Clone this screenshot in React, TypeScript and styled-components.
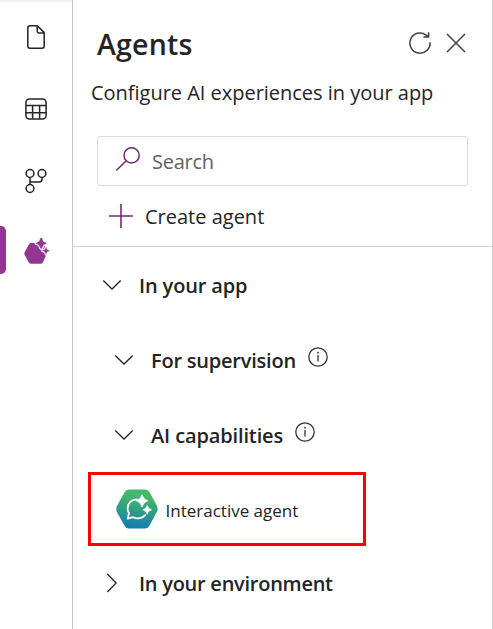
import React from "react";
import styled, { createGlobalStyle } from "styled-components";

const GlobalStyle = createGlobalStyle`
  *, *::before, *::after { box-sizing: border-box; }
  body { margin: 0; background: #fff; color: #242424; overflow: hidden;
    font-family: "Open Sans", "Segoe UI", "Noto Sans", sans-serif; }
  svg { display: block; flex: none; overflow: visible; }
`;

const Shell = styled.div`
  display: flex;
  width: 493px;
  height: 629px;
`;

const Rail = styled.nav`
  width: 73px;
  padding-top: 1px;
  display: flex;
  flex-direction: column;
  border-right: 1px solid #c6c6c6;
  background: linear-gradient(#f0f0f0, #fff 4px);
`;

const RailItem = styled.button<{ $active?: boolean }>`
  position: relative;
  height: ${(p) => (p.$active ? 66 : 72)}px;
  padding: ${(p) => (p.$active ? "2px 0 0 2px" : "0")};
  border: 0;
  background: none;
  display: flex;
  align-items: center;
  justify-content: center;

  &::before {
    content: "";
    display: ${(p) => (p.$active ? "block" : "none")};
    position: absolute;
    left: 0;
    top: 9px;
    width: 6px;
    height: 48px;
    border-radius: 0 5px 5px 0;
    background: #933692;
  }
`;

const Panel = styled.main`
  width: 420px;
  border-right: 1px solid #cfcfcf;
`;

const Header = styled.header`
  height: 78px;
  padding: 10px 26px 0 24px;
  display: flex;
  align-items: center;
  justify-content: space-between;
`;

const Title = styled.h1`
  margin: 0;
  font-size: 28.5px;
  line-height: 36px;
  font-weight: 600;
  letter-spacing: 0.2px;
  white-space: nowrap;
`;

const Actions = styled.div`
  display: flex;
  gap: 14px;
  padding-bottom: 2px;
`;

const Description = styled.p`
  margin: 0;
  padding-left: 18px;
  font-size: 20px;
  line-height: 29px;
  letter-spacing: -0.02px;
  white-space: nowrap;
`;

const SearchBox = styled.label`
  margin: 29px 24px 0;
  height: 50px;
  border: 1px solid #d9d9d9;
  border-radius: 3px;
  display: flex;
  align-items: center;
  gap: 11px;
  padding-left: 18px;
  font-size: 20px;
  letter-spacing: -0.25px;
  color: #616161;
`;

const CreateRow = styled.div`
  height: 61px;
  padding-left: 36px;
  border-bottom: 1px solid #cfcfcf;
  display: flex;
  align-items: center;
  gap: 12px;
  font-size: 20px;
`;

const Section = styled.div<{ $nested?: boolean; $height?: number }>`
  height: ${(p) => p.$height ?? 75}px;
  padding-left: ${(p) => (p.$nested ? 42 : 30)}px;
  display: flex;
  align-items: center;
`;

const SectionTitle = styled.h2<{ $spacing: number }>`
  margin: 0 12px 0 18px;
  font-size: 20px;
  line-height: 28px;
  font-weight: 600;
  letter-spacing: ${(p) => p.$spacing}px;
  white-space: nowrap;
`;

const InfoSlot = styled.span`
  padding-bottom: 8px;
`;

const AgentCard = styled.div`
  width: 278px;
  height: 74px;
  margin: -1px 0 0 15px;
  padding-left: 25px;
  border: 3px solid #fe0000;
  display: flex;
  align-items: center;
  gap: 7.5px;
  font-size: 17px;
`;

const AgentName = styled.span`
  line-height: 24px;
  padding-top: 4px;
`;

const Chevron = ({ right }: { right?: boolean }) => (
  <svg width="18" height="18" viewBox="0 0 18 18" fill="none" stroke="#242424" strokeWidth="1.3">
    <path d={right ? "M4.3 -1 13.1 8 4.3 17" : "M.3 3.5 9 12 17.7 3.5"} />
  </svg>
);

const Info = () => (
  <svg width="20" height="20" viewBox="0 0 20 20" fill="none" stroke="#333" strokeWidth="1.3">
    <circle cx="10" cy="10" r="9.2" />
    <path d="M10 8v6.5" />
    <circle cx="10" cy="5.7" r=".9" fill="#333" stroke="none" />
  </svg>
);

const DocumentIcon = () => (
  <svg width="18" height="24" viewBox="0 0 18 24" fill="none" stroke="#242424" strokeWidth="1.5" strokeLinejoin="round">
    <path d="M3 .8H10.4L17.2 7.6V21Q17.2 23.2 15 23.2H3Q.8 23.2.8 21V3Q.8.8 3 .8Z" />
    <path d="M10.2 1V6.3Q10.2 7.9 11.8 7.9H17" />
  </svg>
);

const TableIcon = () => (
  <svg width="22" height="22" viewBox="0 0 22 22" fill="none" stroke="#242424" strokeWidth="1.5">
    <rect x=".9" y=".9" width="20.2" height="20.2" rx="3.5" />
    <path d="M1 7.5h20M1 14.7h20M7.6 7.5v13.3M14.6 7.5v13.3" />
  </svg>
);

const BranchIcon = () => (
  <svg width="22" height="24" viewBox="0 0 22 24" fill="none" stroke="#242424" strokeWidth="1.5">
    <circle cx="5" cy="4.5" r="3.9" />
    <circle cx="17" cy="4.5" r="3.9" />
    <circle cx="5" cy="19.5" r="3.9" />
    <path d="M5 8.4v7.2M5 13h8.8q3.2 0 3.2-3.1V8.4" />
  </svg>
);

const SPARKLES =
  "M17.2 1Q18 1 18.3 2.2C19 4.7 19.4 5 22 5.8Q22.8 6.3 22 6.8C19.4 7.6 19 8 18.2 10.6Q17.2 12.4 16.2 10.6C15.4 8 15 7.6 12.4 6.8Q11.6 6.3 12.4 5.8C15 5 15.4 4.7 16.1 2.2Q16.4 1 17.2 1Z" +
  "M22 10.2C22.7 12.6 23 12.9 25.6 13.7 23 14.5 22.7 14.8 22 17.4 21.3 14.8 21 14.5 18.4 13.7 21 12.9 21.3 12.6 22 10.2Z";

const AgentsIcon = () => (
  <svg width="26" height="28" viewBox="0 0 26 28" fill="#933692">
    <path d="M7.2 6H19L23 14.4Q23.4 15.6 22.8 16.8L19 25.2Q18.1 26.7 16.4 26.7H7.3Q5.6 26.7 4.7 25.2L.7 17.9Q.1 16.5.7 15.1L5.1 7.3Q5.8 6 7.2 6Z" />
    <path stroke="#fff" strokeWidth="2.6" strokeLinejoin="round" d={SPARKLES} />
    <path stroke="#933692" strokeWidth=".4" d={SPARKLES} />
  </svg>
);

const RefreshIcon = () => (
  <svg width="24" height="24" viewBox="0 0 24 24" fill="none" stroke="#424242" strokeWidth="1.5">
    <path d="M22.1 11.2A10.1 10.1 0 1 1 17.9 3.8L20.5 5.6M20.6 1.2V5.9H15.4" />
  </svg>
);

const CloseIcon = () => (
  <svg width="20" height="24" viewBox="0 0 20 24" fill="none" stroke="#424242" strokeWidth="1.5">
    <path d="M1 3 19 21M19 3 1 21" />
  </svg>
);

const SearchIcon = () => (
  <svg width="25" height="26" viewBox="0 0 25 26" fill="none" stroke="#742774" strokeWidth="1.5">
    <circle cx="15.6" cy="7.4" r="7.6" />
    <path d="M10.2 12.8.3 22.5" />
  </svg>
);

const PlusIcon = () => (
  <svg width="24" height="24" viewBox="0 0 24 24" fill="none" stroke="#742774" strokeWidth="1.6">
    <path d="M12 0v24M0 12h24" />
  </svg>
);

const AgentBadge = () => (
  <svg width="42" height="40" viewBox="0 0 42 40">
    <defs>
      <linearGradient id="agent" x1=".55" y1="0" x2=".4" y2="1">
        <stop offset=".15" stopColor="#45b86b" />
        <stop offset=".5" stopColor="#31a080" />
        <stop offset="1" stopColor="#147bb8" />
      </linearGradient>
    </defs>
    <path fill="url(#agent)" d="M13 .6H29Q32 .6 33.6 3.2L41 16.7Q42.3 20 41 22.6L33.6 36.5Q32 39.4 29 39.4H13Q10 39.4 8.4 36.5L.9 23Q-.3 20 .9 17L8.4 3.5Q10 .6 13 .6Z" />
    <path fill="none" stroke="#fff" strokeWidth="1.8" strokeLinecap="round" strokeLinejoin="round" d="M20.7 10.4C15 10.6 11.6 14.7 11.6 19.5 11.6 21.6 12.4 23.2 13 24.2L11.7 29.6 17 28.2C21.5 30.4 26.5 29.3 29.2 26.2" />
    <path fill="#fff" stroke="#fff" strokeWidth=".8" strokeLinejoin="round" d="M26 5.8Q27.2 10.6 32 11.7 27.2 12.9 26 18 24.8 12.9 20 11.7 24.8 10.6 26 5.8ZM31.2 16.5Q32 20 35.5 20.8 32 21.6 31.2 25.2 30.4 21.6 26.8 20.8 30.4 20 31.2 16.5Z" />
  </svg>
);

export default function App() {
  return (
    <>
      <GlobalStyle />
      <Shell>
        <Rail>
          <RailItem aria-label="Pages"><DocumentIcon /></RailItem>
          <RailItem aria-label="Data"><TableIcon /></RailItem>
          <RailItem aria-label="Automation"><BranchIcon /></RailItem>
          <RailItem $active aria-label="Agents"><AgentsIcon /></RailItem>
        </Rail>
        <Panel>
          <Header>
            <Title>Agents</Title>
            <Actions><RefreshIcon /><CloseIcon /></Actions>
          </Header>
          <Description>Configure AI experiences in your app</Description>
          <SearchBox><SearchIcon /><span>Search</span></SearchBox>
          <CreateRow><PlusIcon /><span>Create agent</span></CreateRow>
          <Section $height={77}><Chevron /><SectionTitle $spacing={-0.14}>In your app</SectionTitle></Section>
          <Section $nested $height={74}><Chevron /><SectionTitle $spacing={-0.22}>For supervision</SectionTitle><InfoSlot><Info /></InfoSlot></Section>
          <Section $nested><Chevron /><SectionTitle $spacing={-0.13}>AI capabilities</SectionTitle><InfoSlot><Info /></InfoSlot></Section>
          <AgentCard><AgentBadge /><AgentName>Interactive agent</AgentName></AgentCard>
          <Section><Chevron right /><SectionTitle $spacing={-0.26}>In your environment</SectionTitle></Section>
        </Panel>
      </Shell>
    </>
  );
}
